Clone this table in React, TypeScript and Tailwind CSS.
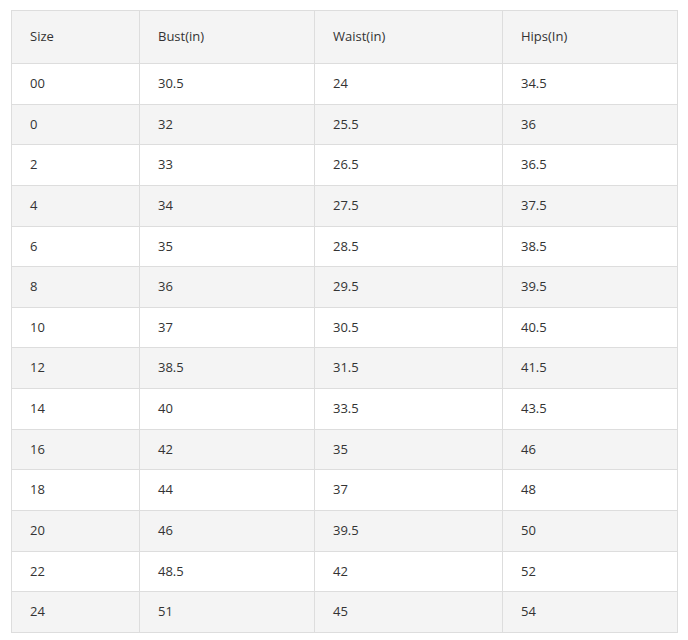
import React from 'react';

const HEADERS = ['Size', 'Bust(in)', 'Waist(in)', 'Hips(In)'];

const ROWS: string[][] = [
    ['00', '30.5', '24', '34.5'],
    ['0', '32', '25.5', '36'],
    ['2', '33', '26.5', '36.5'],
    ['4', '34', '27.5', '37.5'],
    ['6', '35', '28.5', '38.5'],
    ['8', '36', '29.5', '39.5'],
    ['10', '37', '30.5', '40.5'],
    ['12', '38.5', '31.5', '41.5'],
    ['14', '40', '33.5', '43.5'],
    ['16', '42', '35', '46'],
    ['18', '44', '37', '48'],
    ['20', '46', '39.5', '50'],
    ['22', '48.5', '42', '52'],
    ['24', '51', '45', '54'],
];

const App: React.FC = () => {
    return (
        <div className="w-[688px] h-[640px] bg-white pt-[10px] pl-[11px] font-['Open_Sans',sans-serif] text-[13px] text-[#333]">
            <table className="w-[666px] table-fixed border-collapse border border-[#ddd]">
                <colgroup>
                    <col className="w-[128px]" />
                    <col className="w-[175px]" />
                    <col className="w-[188px]" />
                    <col className="w-[175px]" />
                </colgroup>
                <thead>
                    <tr className="h-[53px] bg-[#f4f4f4]">
                        {HEADERS.map(h => (
                            <th key={h} className="border border-[#ddd] pl-[18px] pr-[19px] text-left font-normal align-middle">
                                {h}
                            </th>
                        ))}
                    </tr>
                </thead>
                <tbody>
                    {ROWS.map((row, i) => (
                        <tr key={row[0]} className={`h-[40.64px] ${i % 2 === 1 ? 'bg-[#f4f4f4]' : 'bg-white'}`}>
                            {row.map((cell, j) => (
                                <td key={j} className="border border-[#ddd] pl-[18px] pr-[19px] align-middle">
                                    {cell}
                                </td>
                            ))}
                        </tr>
                    ))}
                </tbody>
            </table>
        </div>
    );
};

export default App;
